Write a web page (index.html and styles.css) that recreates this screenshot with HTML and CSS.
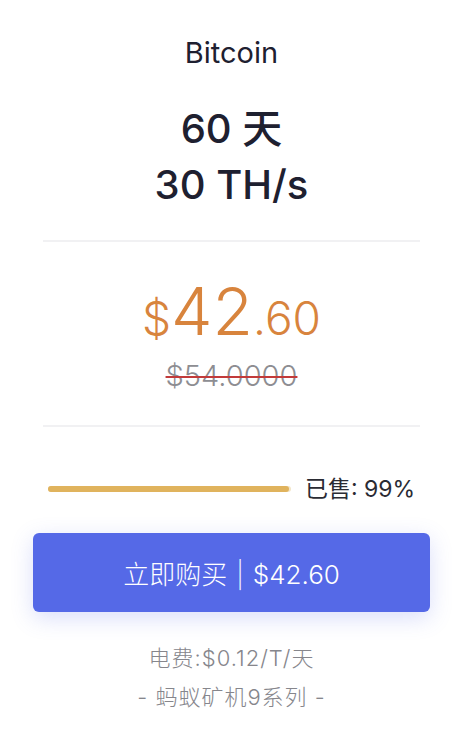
FILE: index.html
```html
<!DOCTYPE html>
<html lang="zh-CN">

<head>
    <meta charset="UTF-8">
    <meta name="viewport" content="width=device-width, initial-scale=1.0">
    <title>Bitcoin</title>
    <link rel="stylesheet" href="styles.css">
</head>

<body>
    <div class="card">
        <div class="coin">Bitcoin</div>

        <div class="plan">
            <div>60 天</div>
            <div>30 TH/s</div>
        </div>

        <div class="line"></div>

        <div class="price">
            <span class="cur">$</span><span class="int">42</span><span class="dec">.60</span>
        </div>
        <div class="old-price">$54.0000</div>

        <div class="line"></div>

        <!-- 进度 -->
        <div class="sold">
            <div class="bar"><div class="bar-fill" style="width: 99%"></div></div>
            <span class="sold-text">已售: 99%</span>
        </div>

        <button class="buy">立即购买<span class="sep">|</span>$42.60</button>

        <div class="fee">电费:$0.12/T/天</div>
        <div class="series">- 蚂蚁矿机9系列 -</div>
    </div>
</body>

</html>
```

FILE: styles.css
```css
body {
    margin: 0;
    background: #fff;
    font-family: Inter, "Noto Sans CJK SC", sans-serif;
    color: #1e2030;
}

.card {
    padding: 37px 34px 0 33px;
    text-align: center;
}

.coin {
    font-size: 29px;
    line-height: 32px;
    font-weight: 400;
}

.plan {
    margin-top: 32px;
    font-size: 40px;
    line-height: 56px;
    font-weight: 500;
}

.line {
    height: 2px;
    margin: 27px 10px 0 10px;
    background: #f1f1f3;
}

.price {
    margin-top: 33px;
    color: #d8843d;
    font-weight: 300;
    line-height: 72px;
}

.price .cur,
.price .dec {
    font-size: 46px;
}

.price .int {
    font-size: 66px;
}

.old-price {
    margin-top: -7px;
    font-size: 29px;
    line-height: 36px;
    color: #8d8d92;
    font-weight: 300;
    text-decoration: line-through;
    text-decoration-color: #c23a3a;
    text-decoration-thickness: 2px;
}

.old-price + .line {
    margin-top: 31px;
}

.sold {
    display: flex;
    align-items: center;
    gap: 14px;
    margin: 50px 15px 0 15px;
}

.bar {
    width: 243px;
    height: 6px;
    flex-shrink: 0;
    border-radius: 3px;
    background: #f3e6c8;
}

.bar-fill {
    height: 100%;
    border-radius: 3px;
    background: #e0b35d;
}

.sold-text {
    font-size: 23px;
    line-height: 24px;
    color: #2a2b33;
    white-space: nowrap;
}

.buy {
    display: block;
    width: 100%;
    height: 79px;
    margin-top: 32px;
    border: none;
    border-radius: 6px;
    background: #5569e7;
    color: #fff;
    font-family: inherit;
    font-size: 26px;
    font-weight: 300;
    box-shadow: 0 6px 22px rgba(85, 105, 231, 0.22);
}

.buy .sep {
    margin: 0 9px;
    font-weight: 200;
}

.fee,
.series {
    font-size: 22px;
    line-height: 26px;
    letter-spacing: 1px;
    color: #86868c;
    font-weight: 300;
}

.fee {
    margin-top: 33px;
}

.series {
    margin-top: 13px;
}
```
